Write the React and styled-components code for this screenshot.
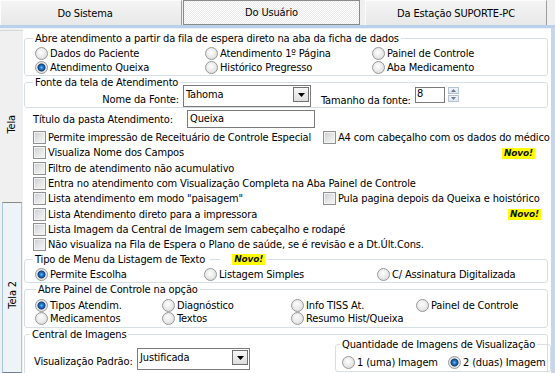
import React from 'react';
import styled, {createGlobalStyle} from 'styled-components';

const GlobalStyle = createGlobalStyle`
html, body {
  margin: 0;
  padding: 0;
  background: #f0f0f0;
}
body {
  font-family: "DejaVu Sans Condensed", "DejaVu Sans", sans-serif;
  font-size: 11px;
  letter-spacing: -0.15px;
  color: #000;
}
`

const Novo = () => <Badge>Novo!</Badge>

const RadioItem = ({label, checked}) => (
    <Option>
        <RadioDot checked={checked}/>
        <span>{label}</span>
    </Option>
)

const CheckItem = ({label, span}) => (
    <CheckOpt span={span}>
        <CheckBox/>
        <span>{label}</span>
    </CheckOpt>
)

const Combo = ({value, width}) => (
    <ComboBox width={width}>
        <span>{value}</span>
        <ComboBtn>
            <svg width="7" height="4" viewBox="0 0 7 4"><polygon points="0,0 7,0 3.5,4" fill="#000"/></svg>
        </ComboBtn>
    </ComboBox>
)

const App = () => {
    return (
        <>
            <GlobalStyle/>
            <Window>
                <TabBar>
                    <Tab w={182} pr={12}>Do Sistema</Tab>
                    <Tab w={177} ml={1} active={true}>Do Usuário</Tab>
                    <Tab w={182} ml={5}>Da Estação SUPORTE-PC</Tab>
                </TabBar>
                <BlueLine/>
                <Main>
                    <SideTabs>
                        <SideTab pt={16}>
                            <SideLabel>Tela</SideLabel>
                        </SideTab>
                        <SideTab hover={true} pt={14}>
                            <SideLabel>Tela 2</SideLabel>
                        </SideTab>
                    </SideTabs>
                    <Page>
                        <Group mt={3}>
                            <Legend>Abre atendimento a partir da fila de espera direto na aba da ficha de dados</Legend>
                            <RadioGrid cols={"170px 167px 1fr"} rh={14} pt={1} pb={1}>
                                <RadioItem label="Dados do Paciente"/>
                                <RadioItem label="Atendimento 1º Página"/>
                                <RadioItem label="Painel de Controle"/>
                                <RadioItem label="Atendimento Queixa" checked={true}/>
                                <RadioItem label="Histórico Pregresso"/>
                                <RadioItem label="Aba Medicamento"/>
                            </RadioGrid>
                        </Group>
                        <Group>
                            <Legend>Fonte da tela de Atendimento</Legend>
                            <FontRow>
                                <FieldLabel w={158} right={true} pt={8}>Nome da Fonte:</FieldLabel>
                                <Combo value="Tahoma" width={128}/>
                                <FieldLabel w={92} ml={10} pt={9}>Tamanho da fonte:</FieldLabel>
                                <SpinEdit>8</SpinEdit>
                                <UpDown>
                                    <UpDownBtn>
                                        <svg width="5" height="3" viewBox="0 0 5 3"><polygon points="0,3 5,3 2.5,0" fill="#6d7c8c"/></svg>
                                    </UpDownBtn>
                                    <UpDownBtn>
                                        <svg width="5" height="3" viewBox="0 0 5 3"><polygon points="0,0 5,0 2.5,3" fill="#6d7c8c"/></svg>
                                    </UpDownBtn>
                                </UpDown>
                            </FontRow>
                        </Group>
                        <TitleRow>
                            <FieldLabel w={154} ml={10}>Título da pasta Atendimento:</FieldLabel>
                            <TextInput>Queixa</TextInput>
                        </TitleRow>
                        <CheckGrid>
                            <CheckItem label="Permite impressão de Receituário de Controle Especial"/>
                            <CheckItem label="A4 com cabeçalho com os dados do médico"/>
                            <CheckItem label="Visualiza Nome dos Campos"/>
                            <BadgeCell ml={179}><Novo/></BadgeCell>
                            <CheckItem label="Filtro de atendimento não acumulativo" span={true}/>
                            <CheckItem label="Entra no atendimento com Visualização Completa na Aba Painel de Controle" span={true}/>
                            <CheckItem label={'Lista atendimento em modo "paisagem"'}/>
                            <CheckItem label="Pula pagina depois da Queixa e hoistórico"/>
                            <CheckItem label="Lista Atendimento direto para a impressora"/>
                            <BadgeCell ml={185}><Novo/></BadgeCell>
                            <CheckItem label="Lista Imagem da Central de Imagem sem cabeçalho e rodapé" span={true}/>
                            <CheckItem label="Não visualiza na Fila de Espera o Plano de saúde, se é revisão e a Dt.Últ.Cons." span={true}/>
                        </CheckGrid>
                        <Group mt={1}>
                            <Legend>
                                Tipo de Menu da Listagem de Texto
                                <Dash/>
                                <Novo/>
                            </Legend>
                            <RadioGrid cols={"169px 173px 1fr"} rh={14} pt={1} pb={1}>
                                <RadioItem label="Permite Escolha" checked={true}/>
                                <RadioItem label="Listagem Simples"/>
                                <RadioItem label="C/ Assinatura Digitalizada"/>
                            </RadioGrid>
                        </Group>
                        <Group>
                            <Legend ml={11}>Abre Painel de Controle na opção</Legend>
                            <RadioGrid cols={"127px 129px 125px 1fr"} rh={13} pt={3} pb={2}>
                                <RadioItem label="Tipos Atendim." checked={true}/>
                                <RadioItem label="Diagnóstico"/>
                                <RadioItem label="Info TISS At."/>
                                <RadioItem label="Painel de Controle"/>
                                <RadioItem label="Medicamentos"/>
                                <RadioItem label="Textos"/>
                                <RadioItem label="Resumo Hist/Queixa"/>
                            </RadioGrid>
                        </Group>
                        <Group>
                            <Legend ml={5}>Central de Imagens</Legend>
                            <ImageRow>
                                <FieldLabel w={103} ml={9} mt={17}>Visualização Padrão:</FieldLabel>
                                <ComboSlot>
                                    <Combo value="Justificada" width={113}/>
                                </ComboSlot>
                                <SubGroup>
                                    <Legend ml={4}>Quantidade de Imagens de Visualização</Legend>
                                    <RadioGrid cols={"106px 1fr"} rh={14} pt={4} pb={2} pl={6}>
                                        <RadioItem label="1 (uma) Imagem"/>
                                        <RadioItem label="2 (duas) Imagem" checked={true}/>
                                    </RadioGrid>
                                </SubGroup>
                            </ImageRow>
                        </Group>
                    </Page>
                </Main>
            </Window>
        </>
    );
};

const Window = styled.div`
width: 555px;
height: 373px;
overflow: hidden;
background: #f0f0f0;
display: flex;
flex-direction: column;
`
const TabBar = styled.div`
height: 25px;
display: flex;
flex-shrink: 0;
`
const Tab = styled.div`
width: ${p => p.w}px;
margin-left: ${p => p.ml || 0}px;
padding-right: ${p => p.pr || 0}px;
box-sizing: border-box;
display: flex;
align-items: center;
justify-content: center;
${p => p.active ? `
border: 1px solid #8a8a8a;
background: repeating-conic-gradient(#ffffff 0 25%, #e9e9e9 0 50%) 0 0 / 2px 2px;
` : `
background: linear-gradient(#f4f4f4, #e8e8e8);
border-top: 1px solid #fcfcfc;
border-left: 1px solid #fcfcfc;
border-right: 1px solid #9c9c9c;
`}
`
const BlueLine = styled.div`
height: 3px;
flex-shrink: 0;
background: #b9d1ea;
`
const Main = styled.div`
flex: 1;
display: flex;
min-height: 0;
border-right: 4px solid #c3d8ee;
`
const SideTabs = styled.div`
width: 23px;
flex-shrink: 0;
display: flex;
flex-direction: column;
padding-top: 2px;
box-sizing: border-box;
`
const SideTab = styled.div`
height: 171px;
box-sizing: border-box;
display: flex;
align-items: center;
justify-content: center;
padding-top: ${p => p.pt || 0}px;
${p => p.hover ? `
margin: 1px 1px 0 2px;
border: 1px solid #a8c6e6;
border-top-color: #8a8a8a;
border-bottom-color: #6f7f90;
background: #eef3f8;
` : `
border-top: 1px solid #d8d8d8;
background: #f0f0f0;
`}
`
const SideLabel = styled.span`
writing-mode: vertical-rl;
transform: rotate(180deg);
`
const Page = styled.div`
flex: 1;
margin-top: 1px;
background: #fff;
display: flex;
flex-direction: column;
overflow: hidden;
`
const Group = styled.fieldset`
margin: ${p => p.mt || 0}px 3px 0 1px;
padding: 0;
border: 1px solid #d5dfe5;
border-radius: 3px;
min-width: 0;
`
const SubGroup = styled.fieldset`
margin: 0 -4px 0 auto;
padding: 0;
width: 216px;
box-sizing: border-box;
border: 1px solid #d5dfe5;
border-radius: 3px;
min-width: 0;
`
const Legend = styled.legend`
margin-left: ${p => p.ml ?? 8}px;
padding: 0 2px;
line-height: 13px;
display: flex;
align-items: center;
`
const Dash = styled.span`
display: inline-block;
width: 10px;
height: 1px;
background: #d5dfe5;
margin: 0 12px 0 5px;
`
const Badge = styled.span`
display: inline-block;
background: #ffff00;
color: #111;
font-family: "DejaVu Sans", sans-serif;
font-weight: bold;
font-style: italic;
font-size: 9px;
line-height: 11px;
height: 11px;
padding: 0 2px;
letter-spacing: -0.2px;
`
const RadioGrid = styled.div`
display: grid;
grid-template-columns: ${p => p.cols};
grid-auto-rows: ${p => p.rh}px;
padding: ${p => p.pt || 0}px 0 ${p => p.pb || 0}px ${p => p.pl ?? 10}px;
`
const Option = styled.label`
display: flex;
align-items: center;
gap: 2px;
white-space: nowrap;
`
const RadioDot = styled.span`
width: 13px;
height: 13px;
border-radius: 50%;
box-sizing: border-box;
flex-shrink: 0;
border: 1px solid #969798;
background: ${p => p.checked
    ? 'radial-gradient(circle at 50% 50%, #6cc0f4 0, #2a7fd0 1.5px, #0f4b92 3.2px, #3a4f68 3.8px, #e2e2e2 4.3px, #f6f6f6 100%)'
    : 'radial-gradient(circle at 45% 40%, #ffffff 0, #ececec 45%, #d4d4d4 100%)'};
`
const CheckGrid = styled.div`
display: grid;
grid-template-columns: 290px 1fr;
grid-auto-rows: 15.3px;
margin: 2px 0 0 10px;
`
const CheckOpt = styled.label`
display: flex;
align-items: center;
gap: 2px;
white-space: nowrap;
grid-column: ${p => p.span ? '1 / -1' : 'auto'};
`
const CheckBox = styled.span`
width: 13px;
height: 13px;
box-sizing: border-box;
flex-shrink: 0;
border: 1px solid #8e8f8f;
background: linear-gradient(135deg, #c9cdd2 0%, #e6e7e8 55%, #f7f7f7 100%);
box-shadow: inset 0 0 0 1px #f3f3f3;
`
const BadgeCell = styled.div`
margin-left: ${p => p.ml}px;
margin-top: 2px;
align-self: start;
line-height: 11px;
`
const FontRow = styled.div`
display: flex;
align-items: flex-start;
margin-top: -4px;
`
const FieldLabel = styled.span`
width: ${p => p.w ? p.w + 'px' : 'auto'};
margin-left: ${p => p.ml || 0}px;
margin-top: ${p => p.mt || 0}px;
padding-top: ${p => p.pt || 0}px;
padding-right: ${p => p.right ? 4 : 0}px;
box-sizing: border-box;
text-align: ${p => p.right ? 'right' : 'left'};
line-height: 13px;
white-space: nowrap;
flex-shrink: 0;
`
const ComboBox = styled.div`
width: ${p => p.width}px;
height: 22px;
box-sizing: border-box;
border: 1px solid #7a7a7a;
background: #fff;
display: flex;
justify-content: space-between;
align-items: flex-start;
padding: 2px 1px 0 2px;
flex-shrink: 0;
`
const ComboBtn = styled.span`
width: 16px;
height: 15px;
margin-top: -1px;
box-sizing: border-box;
border: 1px solid #707070;
background: linear-gradient(#f6f6f6, #dedede);
display: flex;
align-items: center;
justify-content: center;
`
const SpinEdit = styled.div`
width: 30px;
height: 16px;
margin: 2px 0 0 2px;
box-sizing: border-box;
border: 1px solid #7a7a7a;
background: #fff;
padding-left: 1px;
line-height: 11px;
`
const UpDown = styled.div`
display: flex;
flex-direction: column;
margin: 2px 0 0 3px;
gap: 1px;
`
const UpDownBtn = styled.span`
width: 11px;
height: 7px;
box-sizing: border-box;
border: 1px solid #b5c3d2;
background: linear-gradient(#f2f5f9, #dfe7ef);
display: flex;
align-items: center;
justify-content: center;
`
const TitleRow = styled.div`
display: flex;
align-items: center;
margin-top: 2px;
height: 18px;
`
const TextInput = styled.div`
width: 128px;
height: 18px;
box-sizing: border-box;
border: 1px solid #7a7a7a;
background: #fff;
padding-left: 2px;
line-height: 16px;
`
const ImageRow = styled.div`
display: flex;
align-items: flex-start;
margin-top: -3px;
height: 36px;
`
const ComboSlot = styled.div`
margin-top: 10px;
`

export default App;
